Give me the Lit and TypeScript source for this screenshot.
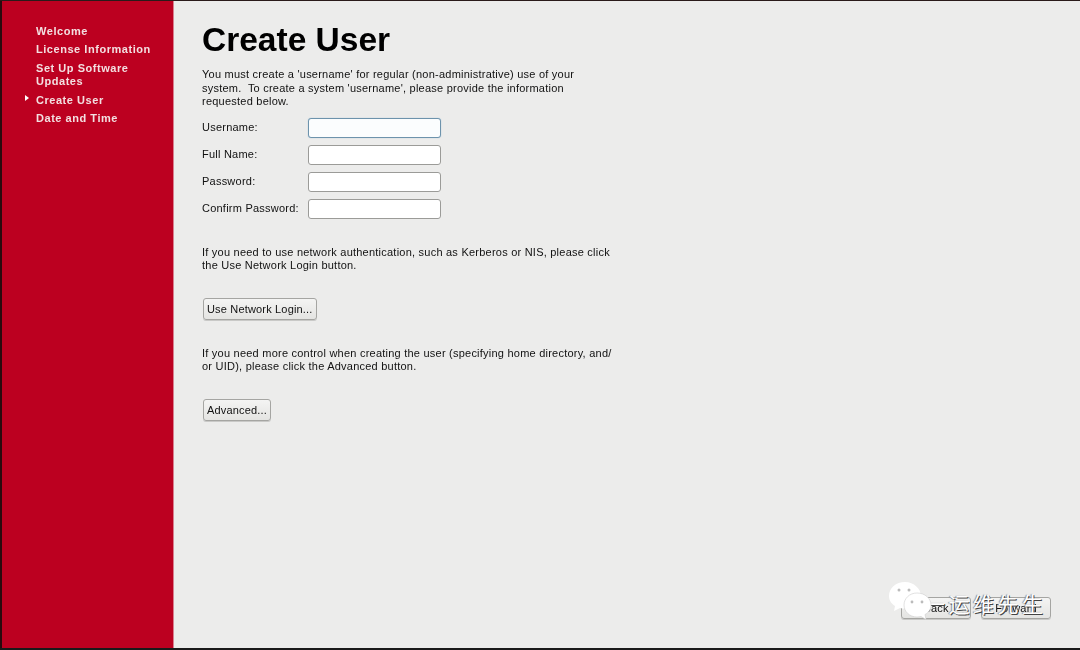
import { LitElement, html, css } from "lit";
import { customElement } from "lit/decorators.js";

@customElement("app-root")
export class AppRoot extends LitElement {
  static styles = css`
    :host { display: block; width: 1080px; height: 650px; overflow: hidden; font-family: "Liberation Sans", Arial, sans-serif; }
    .screen { position: relative; width: 1080px; height: 650px; box-sizing: border-box; display: flex; background: #ececeb; border-top: 1px solid #2a1a1a; border-bottom: 2px solid #1a1a1a; }
    .side { width: 174px; flex: none; box-sizing: border-box; background: #bc0020; border-left: 2px solid #2a0a0e; border-right: 1px solid #d8808f; padding: 23.5px 0 0 34px; color: #f3dfe1; font-size: 11px; font-weight: 700; letter-spacing: 0.54px; line-height: 13.5px; filter: blur(0.4px); }
    .nav { position: relative; margin-bottom: 5px; }
    .nav.cur::before { content: ""; position: absolute; left: -11px; top: 1px; border-left: 4px solid #fff; border-top: 3px solid transparent; border-bottom: 3px solid transparent; }
    .main { flex: 1; padding: 20px 0 0 28px; color: #111; font-size: 11px; letter-spacing: 0.23px; line-height: 13.5px; filter: blur(0.4px); }
    h1 { margin: 0 0 9px; font-size: 33.5px; line-height: 38px; font-weight: 700; color: #000; letter-spacing: 0; }
    p { margin: 0; width: 412px; }
    .form { display: grid; grid-template-columns: 106px 133px; row-gap: 7px; margin-top: 9px; align-items: center; }
    .input { height: 20px; box-sizing: border-box; background: #fff; border: 1px solid #9b9b98; border-radius: 3px; }
    .input.focus { border-color: #6d93ac; box-shadow: 0 0 1px #8fb4cc; background: #fbfdfe; }
    .btn { display: inline-block; box-sizing: border-box; height: 22px; padding: 0 3px; line-height: 20px; color: #111; letter-spacing: 0.17px; background: linear-gradient(#f4f4f3, #e4e4e2); border: 1px solid #a5a5a2; border-radius: 3px; box-shadow: 0 1px 0 #c9c9c7; }
    .net { margin-top: 27px; }
    .row { margin: 25px 0 0 1px; }
    .adv { margin-top: 27px; }
    .footer { position: absolute; right: 29px; top: 596px; display: flex; gap: 10px; font-size: 11px; color: #111; letter-spacing: 0.2px; filter: blur(0.4px); }
    .footer .btn { width: 70px; text-align: center; }
    .mark { position: absolute; left: 888px; top: 580px; width: 170px; height: 42px; }
    .mark svg { position: absolute; left: 0; top: 0; }
    .mark span { position: absolute; left: 36px; top: 10px; font-family: "Noto Sans CJK SC", sans-serif; font-size: 21px; line-height: 24px; letter-spacing: 3.5px; color: #fff; white-space: nowrap; text-shadow: 1px 1px 0 #444, -1px 0 1px #888; }
  `;

  render() {
    const nav = ["Welcome", "License Information", "Set Up Software Updates", "Create User", "Date and Time"];
    const rows = ["Username:", "Full Name:", "Password:", "Confirm Password:"];
    return html`<div class="screen">
      <div class="side">
        ${nav.map((n) => html`<div class="nav ${n === "Create User" ? "cur" : ""}" style=${n.startsWith("Set") ? "width:110px" : ""}>${n}</div>`)}
      </div>
      <div class="main">
        <h1>Create User</h1>
        <p>You must create a 'username' for regular (non-administrative) use of your system.&nbsp; To create a system 'username', please provide the information requested below.</p>
        <div class="form">
          ${rows.map((r, i) => html`<div>${r}</div><div class="input ${i === 0 ? "focus" : ""}"></div>`)}
        </div>
        <p class="net">If you need to use network authentication, such as Kerberos or NIS, please click the Use Network Login button.</p>
        <div class="row"><span class="btn">Use Network Login...</span></div>
        <p class="adv">If you need more control when creating the user (specifying home directory, and/ or UID), please click the Advanced button.</p>
        <div class="row"><span class="btn">Advanced...</span></div>
      </div>
      <div class="footer"><span class="btn">Back</span><span class="btn">Forward</span></div>
      <div class="mark">
        <span>一运维先生</span>
        <svg width="60" height="42" viewBox="0 0 60 42">
          <path fill="#fff" d="M17 1C8 1 1 7 1 15c0 5 3 8 6 10l-1 5 6-3c2 .5 3 .5 5 .5C26 27.500 33 22 33 15S26 1 17 1z"/>
          <path fill="#fff" stroke="#ccc" stroke-width=".6" d="M29 12c-7.500 0-13 5.500-13 12s5.500 12 13 12c1.500 0 3-.2 4-.5l5 3-1-5c4-2 6-5.500 6-9.500 0-6.500-6-12-14-12z"/>
          <circle cx="11" cy="9" r="1.500" fill="#bbb"/><circle cx="21" cy="9" r="1.500" fill="#bbb"/>
          <circle cx="24" cy="21" r="1.400" fill="#bbb"/><circle cx="34" cy="21" r="1.400" fill="#bbb"/>
        </svg>
      </div>
    </div>`;
  }
}
